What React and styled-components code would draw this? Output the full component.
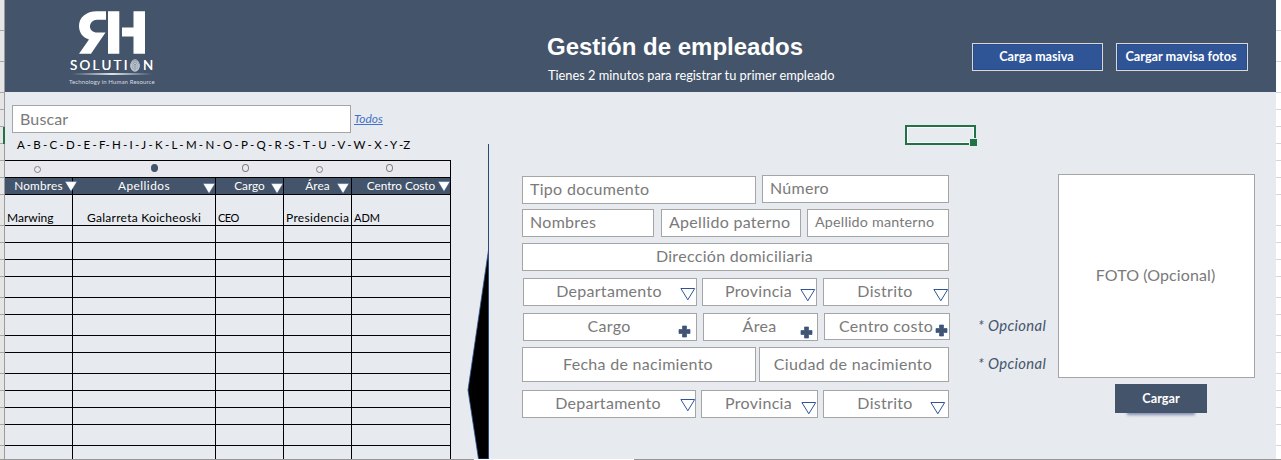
import React from 'react';
import styled, { createGlobalStyle } from 'styled-components';

const navy = '#44546a';
const paper = '#e7eaef';
const line = '#a5a5a5';

const GlobalStyle = createGlobalStyle`
  * { box-sizing: border-box; }
  body { margin: 0; background: #fff; font-family: Lato, "Open Sans", sans-serif; }
`;

/* ---------- sheet frame ---------- */
const Sheet = styled.div`
  position: relative;
  width: 1281px;
  height: 460px;
  overflow: hidden;
  display: flex;
  flex-direction: column;
`;
const Main = styled.div`
  display: flex;
  height: 459px;
`;
const Content = styled.div`
  width: 1271px;
  background: ${paper};
  display: flex;
  flex-direction: column;
`;
const Gutter = styled.div`
  width: 5px;
  overflow: hidden;
  background: #e6e6e6;
`;
const Margin = styled.div`
  width: 5px;
  overflow: hidden;
  background: #fff;
`;
const GutterRow = styled.div`
  height: ${(p) => p.$h}px;
  background: linear-gradient(#a6a6a6, #a6a6a6) bottom / 100% 1px no-repeat;
  border-right: ${(p) => (p.$active ? '2px solid #217346' : '1px solid #9b9b9b')};
`;
const MarginRow = styled.div`
  height: ${(p) => p.$h}px;
  border-bottom: 1px solid #d4d4d4;
`;
const BottomEdge = styled.div`
  display: flex;
  justify-content: space-between;
  height: 1px;
  background: #fff;
`;
const EdgePart = styled.div`
  width: ${(p) => p.$w}px;
  background: #979797;
`;

/* ---------- header ---------- */
const Header = styled.header`
  height: 92px;
  flex: none;
  display: flex;
  background: ${navy};
  color: #fff;
`;
const Brand = styled.div`
  width: 542px;
  padding: 11px 0 0 64px;
  display: flex;
  flex-direction: column;
  align-items: flex-start;
`;
const Mark = styled.svg`
  display: block;
  margin-left: 10px;
`;
const Wordmark = styled.div`
  display: flex;
  align-items: center;
  height: 18px;
  margin-top: 2px;
  padding-left: 1px;
  font-size: 13.4px;
  line-height: 18px;
  letter-spacing: 2.3px;
  text-shadow: 0 0 0.5px #fff;
`;
const Swoosh = styled.div`
  width: 80px;
  height: 2px;
  margin: -1px 0 0 3px;
  background: linear-gradient(90deg, transparent, #dfe3e8 50%, transparent);
`;
const Tagline = styled.div`
  margin-top: 3px;
  font-size: 6px;
  line-height: 7px;
  letter-spacing: 0.12px;
  white-space: nowrap;
  color: #d5dae1;
`;
const Heading = styled.div`
  width: 425px;
  padding-top: 33px;
`;
const Title = styled.h1`
  margin: 0;
  font: bold 24px/28px "Liberation Sans", Arial, sans-serif;
`;
const Subtitle = styled.p`
  margin: 6px 0 0 1px;
  font-size: 12.8px;
  line-height: 17px;
`;
const Actions = styled.div`
  display: flex;
  gap: 13px;
  padding-top: 43px;
`;
const ActionButton = styled.button`
  width: ${(p) => p.$w}px;
  height: 28px;
  padding: 0 2px 2px 0;
  border: 1px solid #d9d9d9;
  background: #2f5597;
  box-shadow: inset 0 0 0 1px #2a4d8a;
  color: #fff;
  font: bold 12.7px/24px Lato, sans-serif;
  white-space: nowrap;
`;

/* ---------- body ---------- */
const Body = styled.div`
  flex: 1;
  display: flex;
  min-height: 0;
`;
const ListPanel = styled.section`
  width: 446px;
  height: 367px;
  overflow: hidden;
  padding-top: 13px;
  flex: none;
`;
const SearchRow = styled.div`
  display: flex;
  align-items: center;
  padding-left: 7px;
  gap: 3px;
`;
const SearchBox = styled.div`
  width: 339px;
  height: 28px;
  padding-left: 7px;
  border: 1px solid ${line};
  background: #fff;
  color: #7a7a7a;
  font-size: 16px;
  line-height: 25px;
  letter-spacing: 0.15px;
`;
const AllLink = styled.a`
  color: #4472c4;
  font-size: 12px;
  line-height: 16px;
  font-style: italic;
  text-decoration: underline;
`;
const Alphabet = styled.div`
  height: 27px;
  padding-left: 12px;
  font-size: 11.5px;
  line-height: 24px;
  word-spacing: -0.66px;
  white-space: pre;
  color: #000;
`;
const Table = styled.div`
  border-top: 1px solid #000;
  border-right: 1px solid #000;
`;
const columns = '68px 143px 68px 68px 98px';
const SelectorRow = styled.div`
  display: grid;
  grid-template-columns: ${columns};
  height: 17px;
  border-bottom: 1px solid #000;
  background: #e8e8ee;
`;
const Radio = styled.span`
  width: 7px;
  height: ${(p) => (p.$tall ? 8 : 7)}px;
  margin: ${(p) => (p.$tall ? 3 : 5)}px 0 0 ${(p) => p.$x}px;
  border: 1px solid ${(p) => (p.$on ? navy : '#808080')};
  border-radius: 50%;
  background: ${(p) => (p.$on ? navy : '#ececec')};
`;
const HeadRow = styled.div`
  display: grid;
  grid-template-columns: ${columns};
  height: 17px;
  border-bottom: 1px solid #000;
  background: ${navy};
`;
const HeadCell = styled.div`
  position: relative;
  border-right: 1px solid #000;
  color: #fff;
  font-size: 11.8px;
  line-height: 16px;
  letter-spacing: ${(p) => p.$ls}px;
  text-align: center;
  &:last-child { border-right: 0; }
`;
const SortArrow = styled.svg`
  position: absolute;
  z-index: 1;
  top: ${(p) => p.$y}px;
  left: ${(p) => p.$x}px;
`;
const Row = styled.div`
  display: grid;
  grid-template-columns: ${columns};
  height: ${(p) => p.$h}px;
  border-bottom: 1px solid #000;
  &:last-child { border-bottom: 0; }
`;
const Cell = styled.div`
  display: flex;
  align-items: flex-end;
  justify-content: ${(p) => (p.$center ? 'center' : 'flex-start')};
  padding: 0 ${(p) => (p.$center ? 2 : 0)}px 0 2px;
  border-right: 1px solid #000;
  font-size: ${(p) => p.$size || 12}px;
  line-height: 14px;
  letter-spacing: ${(p) => p.$ls || 0}px;
  white-space: nowrap;
  color: #000;
  &:last-child { border-right: 0; }
`;
const Divider = styled.svg`
  display: block;
  flex: none;
  margin: 52px 33px 0 16px;
`;

/* ---------- form ---------- */
const Form = styled.section`
  width: 429px;
  flex: none;
  padding-top: 83px;
`;
const FormRow = styled.div`
  display: flex;
  align-items: flex-start;
  height: ${(p) => p.$h}px;
  padding-left: ${(p) => p.$indent || 0}px;
`;
const Field = styled.div`
  position: relative;
  flex: none;
  width: ${(p) => p.$w}px;
  height: ${(p) => p.$h || 28}px;
  margin-top: ${(p) => p.$top || 0}px;
  margin-right: ${(p) => p.$gap || 0}px;
  padding-left: ${(p) => (p.$left ? 7 : 0)}px;
  padding-right: ${(p) => (p.$left ? 0 : 2)}px;
  border: 1px solid ${line};
  background: #fff;
  color: #7a7a7a;
  font-size: ${(p) => p.$size || 16}px;
  line-height: ${(p) => (p.$h || 28) - 4}px;
  letter-spacing: ${(p) => (p.$size ? 0.2 : 0.3)}px;
  text-align: ${(p) => (p.$left ? 'left' : 'center')};
  white-space: nowrap;
`;
const FieldIcon = styled.svg`
  position: absolute;
  left: ${(p) => p.$x}px;
  top: ${(p) => p.$y}px;
`;
const Notes = styled.aside`
  width: 107px;
  flex: none;
  padding: 224px 0 0 27px;
`;
const Note = styled.p`
  margin: 0 0 20px;
  color: ${navy};
  font-size: 14.8px;
  line-height: 18px;
  letter-spacing: 0.35px;
  font-style: italic;
  white-space: nowrap;
`;
const PhotoColumn = styled.section`
  width: 197px;
  flex: none;
  padding-top: 82px;
`;
const PhotoBox = styled.div`
  height: 204px;
  padding-right: 2px;
  border: 1px solid ${line};
  background: #fff;
  color: #7a7a7a;
  font-size: 16px;
  line-height: 200px;
  letter-spacing: 0.1px;
  text-align: center;
`;
const UploadButton = styled.button`
  display: block;
  width: 92px;
  height: 29px;
  margin: 6px 0 0 57px;
  padding: 0 0 1px;
  border: 0;
  background: ${navy};
  box-shadow: 0 14px 3px -12px rgba(68, 84, 140, 0.6);
  color: #fff;
  font: bold 12.7px/27px Lato, sans-serif;
`;

/* active cell marker floats over the sheet */
const ActiveCell = styled.div`
  position: absolute;
  left: 905px;
  top: 125px;
  width: 71px;
  height: 20px;
  border: 2px solid #217346;
  box-shadow: inset 0 0 0 1px #fff;
  &::after {
    content: '';
    position: absolute;
    right: -4px;
    bottom: -4px;
    width: 7px;
    height: 7px;
    border: 1px solid ${paper};
    background: #217346;
  }
`;

const sheetRows = [31, 31, 31, 17, 17, 17, 17, 17, 17, 31, 17, 17, 17, 21, 17, 21, 17, 21, 17, 17, 17, 21, 14];
const emptyRows = [17, 17, 17, 21, 17, 21, 17, 21, 17, 17, 17, 21, 14];

const heads = [
  { t: 'Nombres', ls: 0.2, x: 58.5, y: 3 },
  { t: 'Apellidos', ls: 0.5, x: 128.5, y: 5 },
  { t: 'Cargo', ls: 0, x: 53.5, y: 5 },
  { t: 'Área', ls: 0.1, x: 51.5, y: 5 },
  { t: 'Centro Costo', ls: -0.05, x: 84.500, y: 3 },
];

const Sort = ({ x, y }) => (
  <SortArrow $x={x} $y={y} width="14" height="11" viewBox="0 0 14 11">
    <path d="M1 .6H13L7 10.500Z" fill="#fff" stroke="#2f5597" strokeWidth=".5" />
  </SortArrow>
);
const Chevron = ({ x, y }) => (
  <FieldIcon $x={x} $y={y} width="16" height="14" viewBox="0 0 16 14">
    <path d="M.9 1.500H14.700L7.800 12.800Z" fill="#fff" stroke="#2f5597" strokeWidth="1" />
  </FieldIcon>
);
const Plus = ({ x, y }) => (
  <FieldIcon $x={x} $y={y} width="13" height="13" viewBox="0 0 13 13">
    <path d="M4.500 1h4v3.500H12v4H8.500V12h-4V8.500H1v-4h3.500Z" fill="#44546a" stroke="#2f5597" strokeWidth=".7" />
  </FieldIcon>
);

const Logo = () => (
  <Brand>
    <Mark width="66" height="43" viewBox="0 0 66 43">
      <g fill="#fff">
        <path d="M27 .3H18C7 .3 0 6.500 0 15c0 6.500 3.500 11.500 10 13.500L0 42.700h12L26.500 21.500H18c-4 0-7-2.500-7-6s3-6.800 7-6.800h9Z" />
        <path d="M29 .3h11.300v42.400H29ZM43 16.500h11.500V.3H66v42.400H54.500V25.500H43Z" />
      </g>
    </Mark>
    <Wordmark>
      SOLUTI
      <svg width="10" height="13" viewBox="0 0 10 13">
        <ellipse cx="5" cy="6.500" rx="4.500" ry="6" fill="#8b96a5" />
        <g fill="none" stroke="#e3e7ec" strokeWidth=".55">
          <ellipse cx="5" cy="6.500" rx="4.300" ry="5.800" />
          <path d="M2 11V6a3 3.500 0 0 1 6 0v5M3.300 12V6.500a1.700 2.200 0 0 1 3.400 0V12M5 6v6.400M1 8.500V5M9 8.500V5" />
        </g>
      </svg>
      <span>&#8202;N</span>
    </Wordmark>
    <Swoosh />
    <Tagline>Technology in Human Resource</Tagline>
  </Brand>
);

export default function App() {
  return (
    <>
      <GlobalStyle />
      <Sheet>
        <Main>
          <Gutter>
            {sheetRows.map((h, i) => <GutterRow key={i} $h={h} $active={i === 5} />)}
          </Gutter>
          <Content>
            <Header>
              <Logo />
              <Heading>
                <Title>Gestión de empleados</Title>
                <Subtitle>Tienes 2 minutos para registrar tu primer empleado</Subtitle>
              </Heading>
              <Actions>
                <ActionButton $w={131}>Carga masiva</ActionButton>
                <ActionButton $w={132}>Cargar mavisa fotos</ActionButton>
              </Actions>
            </Header>
            <Body>
              <ListPanel>
                <SearchRow>
                  <SearchBox>Buscar</SearchBox>
                  <AllLink>Todos</AllLink>
                </SearchRow>
                <Alphabet>{'A - B - C - D - E - F- H - I - J - K - L - M - N - O - P - Q - R -S - T - U  - V - W - X - Y -Z'}</Alphabet>
                <Table>
                  <SelectorRow>
                    <Radio $x={29} />
                    <Radio $x={78} $tall $on />
                    <Radio $x={26} $tall />
                    <Radio $x={32} />
                    <Radio $x={34} $tall />
                  </SelectorRow>
                  <HeadRow>
                    {heads.map((h) => (
                      <HeadCell key={h.t} $ls={h.ls}>
                        {h.t}
                        <Sort x={h.x} y={h.y} />
                      </HeadCell>
                    ))}
                  </HeadRow>
                  <Row $h={31}>
                    <Cell>Marwing</Cell>
                    <Cell $center $ls={0.28}>Galarreta Koicheoski</Cell>
                    <Cell $size={11} $ls={-0.5}>CEO</Cell>
                    <Cell $ls={0.3}>Presidencia</Cell>
                    <Cell $size={11}>ADM</Cell>
                  </Row>
                  {emptyRows.map((h, i) => (
                    <Row key={i} $h={h}><Cell /><Cell /><Cell /><Cell /><Cell /></Row>
                  ))}
                </Table>
              </ListPanel>
              <Divider width="22" height="315" viewBox="0 0 22 315">
                <path d="M21.500 106L1 246L11.500 315H21.500Z" fill="#000" stroke="#2f5597" strokeWidth=".8" />
                <path d="M21.500 0V315" stroke="#2b4a7c" strokeWidth="1" />
              </Divider>
              <Form>
                <FormRow $h={34}>
                  <Field $w={234} $gap={6} $top={1} $left>Tipo documento</Field>
                  <Field $w={187} $left>Número</Field>
                </FormRow>
                <FormRow $h={34}>
                  <Field $w={132} $gap={7} $left>Nombres</Field>
                  <Field $w={140} $gap={6} $left>Apellido paterno</Field>
                  <Field $w={142} $left $size={14.3}>Apellido manterno</Field>
                </FormRow>
                <FormRow $h={35}>
                  <Field $w={427}>Dirección domiciliaria</Field>
                </FormRow>
                <FormRow $h={35} $indent={1}>
                  <Field $w={174} $gap={5}>Departamento<Chevron x={156} y={8} /></Field>
                  <Field $w={115} $gap={6}>Provincia<Chevron x={97} y={9} /></Field>
                  <Field $w={126}>Distrito<Chevron x={109} y={9} /></Field>
                </FormRow>
                <FormRow $h={34} $indent={1}>
                  <Field $w={174} $gap={6}>Cargo<Plus x={154} y={11} /></Field>
                  <Field $w={115} $gap={6}>Área<Plus x={96} y={12} /></Field>
                  <Field $w={126} $h={27}>Centro costo<Plus x={110} y={10} /></Field>
                </FormRow>
                <FormRow $h={43}>
                  <Field $w={234} $h={35} $gap={3}>Fecha de nacimiento</Field>
                  <Field $w={190} $h={35}>Ciudad de nacimiento</Field>
                </FormRow>
                <FormRow $h={28}>
                  <Field $w={174} $gap={5}>Departamento<Chevron x={157} y={7} /></Field>
                  <Field $w={117} $gap={5}>Provincia<Chevron x={99} y={10} /></Field>
                  <Field $w={126}>Distrito<Chevron x={106} y={10} /></Field>
                </FormRow>
              </Form>
              <Notes>
                <Note>* Opcional</Note>
                <Note>* Opcional</Note>
              </Notes>
              <PhotoColumn>
                <PhotoBox>FOTO (Opcional)</PhotoBox>
                <UploadButton>Cargar</UploadButton>
              </PhotoColumn>
            </Body>
          </Content>
          <Margin>
            {sheetRows.map((h, i) => <MarginRow key={i} $h={h} />)}
          </Margin>
        </Main>
        <BottomEdge>
          <EdgePart $w={474} />
          <EdgePart $w={647} />
        </BottomEdge>
        <ActiveCell />
      </Sheet>
    </>
  );
}
